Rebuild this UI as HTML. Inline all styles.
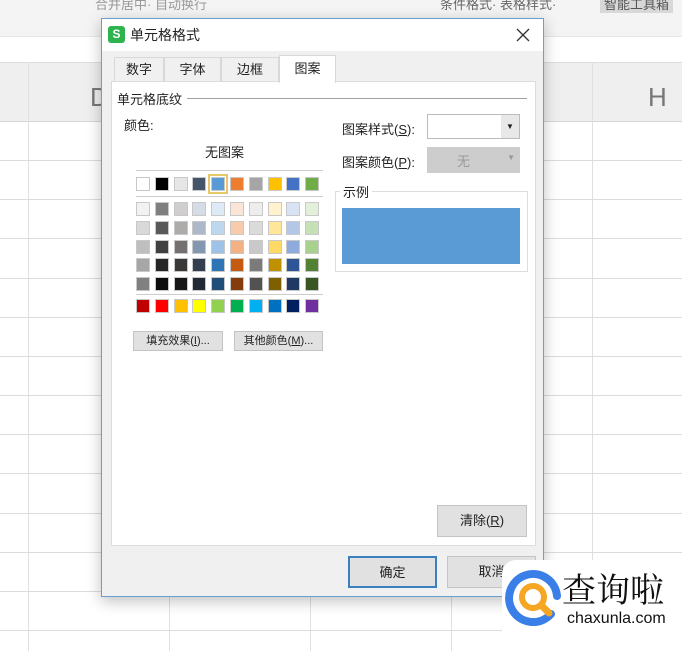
<!DOCTYPE html>
<html><head><meta charset="utf-8"><style>
*{margin:0;padding:0;box-sizing:border-box}
body{width:682px;height:651px;overflow:hidden;position:relative;background:#fff;font-family:"Liberation Sans","Noto Sans CJK SC",sans-serif;font-size:13px;color:#222}
.a{position:absolute}
.hl{position:absolute;left:0;width:682px;height:1px;background:#dcdcdc}
.vl{position:absolute;top:62px;width:1px;height:589px;background:#e0e0e0}
.sw{position:absolute;width:14px;height:14px;border:1px solid #c8c8c8}
.btn{position:absolute;background:#e1e1e1;border:1px solid #c4c4c4;text-align:center;font-size:13px}
</style></head><body>
<div class="a" style="left:0;top:0;width:682px;height:36px;background:#f4f4f4"></div>
<div class="a" style="left:0;top:-6px;width:682px;color:#999;font-size:13px;white-space:nowrap">
<span style="position:absolute;left:95px">合并居中· 自动换行</span>
<span style="position:absolute;left:440px;color:#666">条件格式· 表格样式·</span>
<span style="position:absolute;left:600px;background:#d8d8d8;padding:0 4px;color:#555">智能工具箱</span></div>
<div class="a" style="left:0;top:36px;width:682px;height:26px;background:#fff;border-top:1px solid #e6e6e6"></div>
<div class="a" style="left:0;top:62px;width:682px;height:60px;background:#efefef;border-top:1px solid #ddd;border-bottom:1px solid #d6d6d6"></div>
<div class="a" style="left:648px;top:82px;font-size:26px;color:#777">H</div>
<div class="a" style="left:90px;top:82px;font-size:26px;color:#777">D</div>
<div class="vl" style="left:28px"></div><div class="vl" style="left:169px"></div><div class="vl" style="left:310px"></div><div class="vl" style="left:451px"></div><div class="vl" style="left:592px"></div>
<div class="hl" style="top:160px"></div><div class="hl" style="top:199px"></div><div class="hl" style="top:238px"></div><div class="hl" style="top:278px"></div><div class="hl" style="top:317px"></div><div class="hl" style="top:356px"></div><div class="hl" style="top:395px"></div><div class="hl" style="top:434px"></div><div class="hl" style="top:473px"></div><div class="hl" style="top:513px"></div><div class="hl" style="top:552px"></div><div class="hl" style="top:591px"></div><div class="hl" style="top:630px"></div>

<div class="a" style="left:101px;top:18px;width:443px;height:579px;background:#f0f0f0;border:1px solid #6a9fcf;box-shadow:0 4px 14px rgba(0,0,0,.25)">
<div class="a" style="left:0;top:0;width:441px;height:32px;background:#fff"></div>
<div class="a" style="left:6px;top:7px;width:17px;height:17px;background:#2eb34f;border-radius:3px;color:#fff;font-size:12px;font-weight:bold;text-align:center;line-height:17px">S</div>
<div class="a" style="left:28px;top:6px;font-size:14px">单元格格式</div>
<svg class="a" style="left:414px;top:9px" width="14" height="14"><path d="M1 1L13 13M13 1L1 13" stroke="#333" stroke-width="1.3"/></svg>
<div class="a" style="left:12px;top:38px;width:50px;height:25px;border:1px solid #d8d8d8;background:#f0f0f0;text-align:center;line-height:24px">数字</div>
<div class="a" style="left:62px;top:38px;width:57px;height:25px;border:1px solid #d8d8d8;background:#f0f0f0;text-align:center;line-height:24px">字体</div>
<div class="a" style="left:119px;top:38px;width:58px;height:25px;border:1px solid #d8d8d8;background:#f0f0f0;text-align:center;line-height:24px">边框</div>
<div class="a" style="left:9px;top:62px;width:425px;height:465px;background:#fff;border:1px solid #dcdcdc"></div>
<div class="a" style="left:177px;top:36px;width:57px;height:28px;border:1px solid #d8d8d8;border-bottom:none;background:#fff;text-align:center;line-height:26px">图案</div>
<div class="a" style="left:15px;top:70px;background:#fff;padding-right:3px">单元格底纹</div>
<div class="a" style="left:85px;top:79px;width:340px;height:1px;background:#a0a0a0"></div>
<div class="a" style="left:22px;top:96px">颜色:</div>
<div class="a" style="left:103px;top:123px">无图案</div>
<div class="a" style="left:34px;top:151px;width:187px;height:1px;background:#ccc"></div>
<div class="a" style="left:34px;top:177px;width:187px;height:1px;background:#ccc"></div>
<div class="a" style="left:34px;top:275px;width:187px;height:1px;background:#ccc"></div>
<div id="g"></div>
<div class="btn" style="left:31px;top:312px;width:90px;height:20px;font-size:11px;line-height:18px">填充效果(<u>I</u>)...</div>
<div class="btn" style="left:132px;top:312px;width:89px;height:20px;font-size:11px;line-height:18px">其他颜色(<u>M</u>)...</div>
<div class="a" style="left:240px;top:100px">图案样式(<u>S</u>):</div>
<div class="a" style="left:325px;top:95px;width:93px;height:25px;border:1px solid #bbb;background:#fff"><span style="position:absolute;right:0;top:0;width:18px;height:23px;background:#e8e8e8;font-size:8px;text-align:center;line-height:23px">▼</span></div>
<div class="a" style="left:240px;top:133px">图案颜色(<u>P</u>):</div>
<div class="a" style="left:325px;top:128px;width:93px;height:26px;background:#cdcdcd;color:#999;font-size:13px"><span style="position:absolute;left:30px;top:4px">无</span><span style="position:absolute;right:5px;top:6px;font-size:8px">▼</span></div>
<div class="a" style="left:233px;top:172px;width:193px;height:81px;border:1px solid #ddd"></div>
<div class="a" style="left:238px;top:163px;background:#fff;padding:0 3px">示例</div>
<div class="a" style="left:240px;top:189px;width:178px;height:56px;background:#5b9bd5"></div>
<div class="btn" style="left:335px;top:486px;width:90px;height:32px;line-height:30px">清除(<u>R</u>)</div>
<div class="btn" style="left:246px;top:537px;width:89px;height:32px;line-height:30px;border:2px solid #3c7fc0">确定</div>
<div class="btn" style="left:345px;top:537px;width:89px;height:32px;line-height:30px">取消</div>
</div>

<div class="a" style="left:502px;top:560px;width:185px;height:95px;background:#fff;border-radius:14px"></div>
<svg class="a" style="left:505px;top:566px" width="60" height="62" viewBox="0 0 60 62">
<path d="M46 48 A24 24 0 1 1 52 30" fill="none" stroke="#3a7ee8" stroke-width="8" stroke-linecap="round"/>
<circle cx="28" cy="31" r="11" fill="none" stroke="#f5a623" stroke-width="6"/>
<path d="M36 39 L44 47" stroke="#f5a623" stroke-width="7" stroke-linecap="round"/>
</svg>
<div class="a" style="left:562px;top:568px;font-size:34px;line-height:40px;color:#111;font-family:'Noto Serif CJK SC',serif">查询啦</div>
<div class="a" style="left:567px;top:610px;font-size:16px;color:#111">chaxunla.com</div>
<script>
var base=["#ffffff","#000000","#e7e6e6","#44546a","#5b9bd5","#ed7d31","#a5a5a5","#ffc000","#4472c4","#70ad47"];
var t=[["#f2f2f2","#d9d9d9","#bfbfbf","#a6a6a6","#808080"],["#7f7f7f","#595959","#404040","#262626","#0d0d0d"],["#d0cece","#aeabab","#757171","#3b3838","#181717"],["#d6dce5","#adb9ca","#8497b0","#333f50","#222a35"],["#deebf7","#bdd7ee","#9dc3e6","#2e75b6","#1f4e79"],["#fbe5d6","#f8cbad","#f4b183","#c55a11","#843c0c"],["#ededed","#dbdbdb","#c9c9c9","#7b7b7b","#525252"],["#fff2cc","#ffe699","#ffd966","#bf9000","#7f6000"],["#dae3f3","#b4c7e7","#8faadc","#2f5597","#203864"],["#e2f0d9","#c5e0b4","#a9d18e","#548235","#385723"]];
var s=["#c00000","#ff0000","#ffc000","#ffff00","#92d050","#00b050","#00b0f0","#0070c0","#002060","#7030a0"];
var h="";
for(var c=0;c<10;c++){var x=34+c*18.8;
h+='<div class="sw" style="left:'+x+'px;top:158px;background:'+base[c]+(c==4?';outline:2px solid #e6c86a;outline-offset:1px':'')+'"></div>';
for(var r=0;r<5;r++)h+='<div class="sw" style="left:'+x+'px;top:'+(183+r*18.8)+'px;background:'+t[c][r]+'"></div>';
h+='<div class="sw" style="left:'+x+'px;top:280px;background:'+s[c]+'"></div>';}
document.getElementById("g").outerHTML=h;
</script>
</body></html>
